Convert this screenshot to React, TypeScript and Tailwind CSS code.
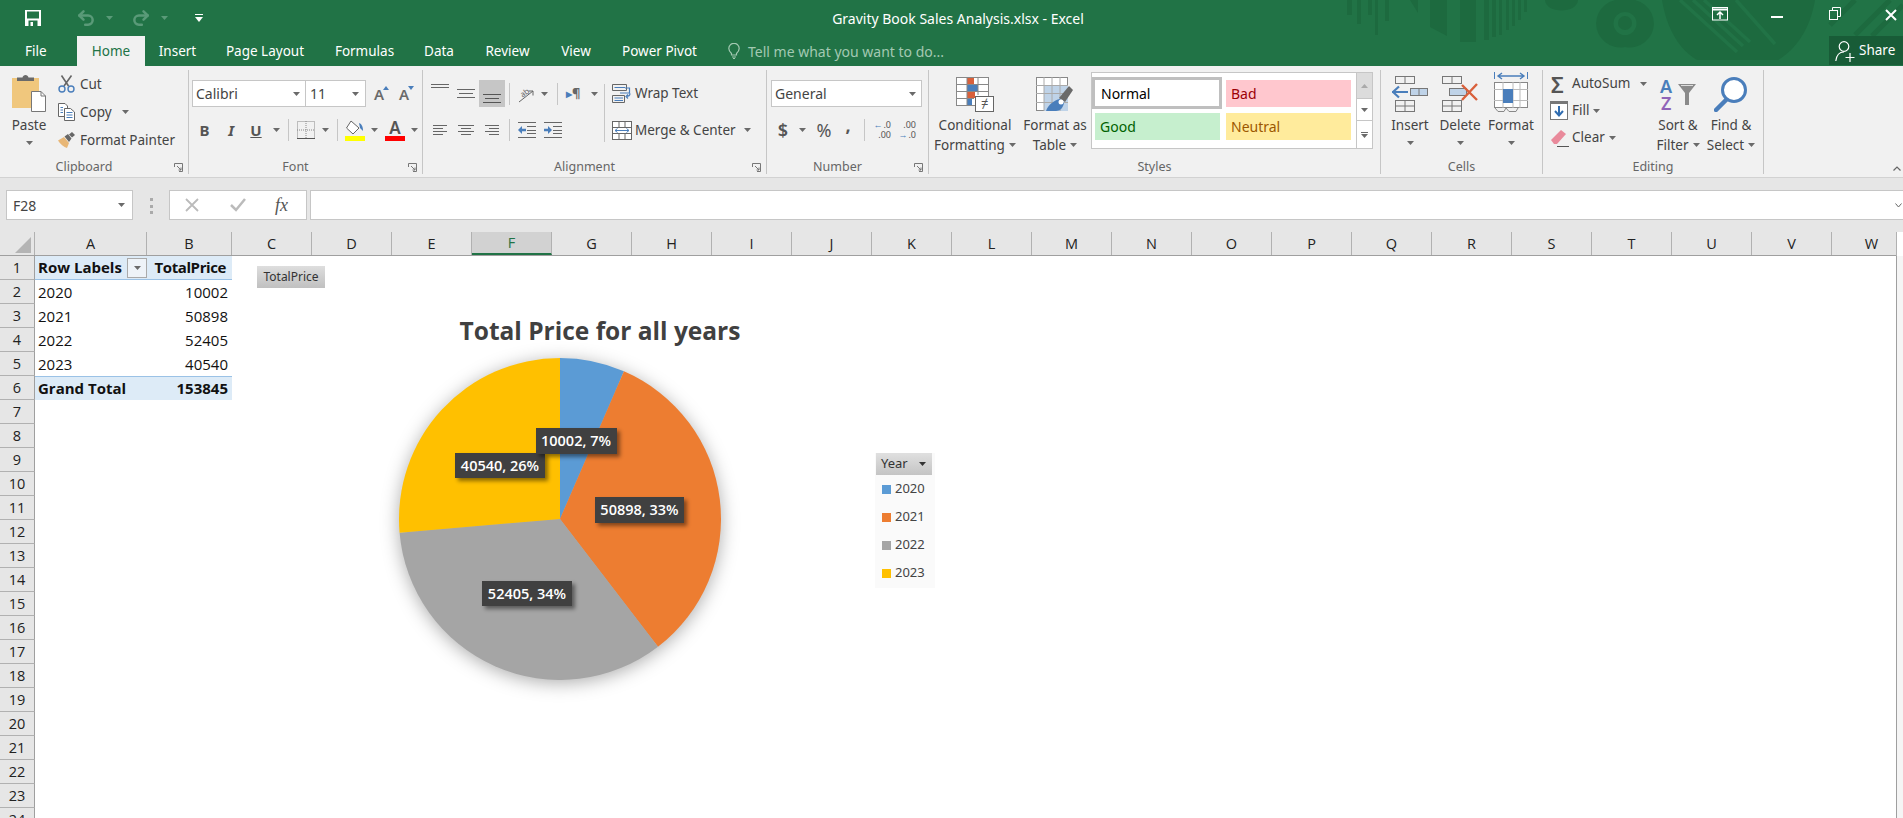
import type { ReactNode } from 'react';
import { Redo2, Undo2 } from 'lucide-react';

const ui = "font-['Noto_Sans',sans-serif]";
const sheetFont = "font-['Open_Sans',sans-serif]";

function Caret({ className = '', color = '#6a6a6a' }: { className?: string; color?: string }) {
  return (
    <svg width="7" height="4" viewBox="0 0 7 4" className={`shrink-0 ${className}`}>
      <polygon points="0,0 7,0 3.5,4" fill={color} />
    </svg>
  );
}

function Launcher() {
  return (
    <svg width="9" height="9" viewBox="0 0 9 9" className="absolute right-[5px] bottom-[2px]" fill="none" stroke="#777">
      <path d="M0.5 4V0.5H8.5V8.5H5" />
      <path d="M3 3L7 7M7 4.5V7H4.5" />
    </svg>
  );
}

function Sep({ className = '' }: { className?: string }) {
  return <div className={`w-px h-[22px] bg-[#c6c6c6] shrink-0 ${className}`} />;
}

function Group({ w, label, launcher, children }: { w: string; label: string; launcher?: boolean; children: ReactNode }) {
  return (
    <div className={`${w} shrink-0 h-[104px] border-r border-[#c6c6c6] relative flex flex-col`}>
      <div className="h-[88px] shrink-0 flex">{children}</div>
      <div className={`h-[18px] shrink-0 leading-[18px] text-center text-[12.5px] text-[#666] ${launcher ? 'pr-[20px]' : ''}`}>{label}</div>
      {launcher && <Launcher />}
    </div>
  );
}

function BigButton({ w, icon, lines, caret = true, iconClass = 'h-[42px]' }: { w: string; icon: ReactNode; lines: string[]; caret?: boolean; iconClass?: string }) {
  return (
    <div className={`${w} shrink-0 flex flex-col items-center text-[13.5px] leading-[20px] text-[#444] whitespace-nowrap`}>
      <div className={`${iconClass} flex items-end justify-center`}>{icon}</div>
      <div className="mt-[3px]">{lines[0]}</div>
      {lines[1] ? (
        <div className="flex items-center gap-[4px]">
          {lines[1]}
          {caret && <Caret />}
        </div>
      ) : (
        <Caret className="mt-[6px]" />
      )}
    </div>
  );
}

function Lines({ w = 18, h = 10, rows, color = '#666' }: { w?: number; h?: number; rows: [number, number, number][]; color?: string }) {
  return (
    <svg width={w} height={h} viewBox={`0 0 ${w} ${h}`} stroke={color}>
      {rows.map(([a, b, y], i) => (
        <line key={i} x1={a} x2={b} y1={y + 0.5} y2={y + 0.5} />
      ))}
    </svg>
  );
}

function IndentIcon({ flip }: { flip?: boolean }) {
  return (
    <svg width="18" height="16" viewBox="0 0 18 16">
      <g stroke="#666">
        <line x1="0" x2="18" y1="0.5" y2="0.5" />
        <line x1="9" x2="18" y1="4.5" y2="4.5" />
        <line x1="9" x2="18" y1="8.5" y2="8.5" />
        <line x1="9" x2="18" y1="11.5" y2="11.5" />
        <line x1="0" x2="18" y1="15.5" y2="15.5" />
      </g>
      {flip ? (
        <path d="M0 6.7H4V4L8 8L4 12V9.3H0Z" fill="#4a7ebb" />
      ) : (
        <path d="M8 6.7H4V4L0 8L4 12V9.3H8Z" fill="#4a7ebb" />
      )}
    </svg>
  );
}

function PasteIcon() {
  return (
    <svg width="34" height="38" viewBox="0 0 34 38">
      <rect x="0" y="4" width="27" height="30" fill="#f0c77d" />
      <path d="M5 7V3.5H10.5C11 0 16 0 16.5 3.5H22V7Z" fill="#6a6a6a" />
      <path d="M19.5 17.5H29L33.5 22V37.5H19.5Z" fill="#fff" stroke="#777" />
      <path d="M29 17.5V22H33.5" fill="none" stroke="#777" />
    </svg>
  );
}

function CutIcon() {
  return (
    <svg width="17" height="18" viewBox="0 0 17 18" fill="none">
      <path d="M6 11L13.5 0.5M10.5 11L3.5 0.5" stroke="#666" strokeWidth="1.6" />
      <circle cx="4" cy="14" r="3" stroke="#4a7ebb" strokeWidth="1.4" />
      <circle cx="13" cy="14" r="3" stroke="#4a7ebb" strokeWidth="1.4" />
    </svg>
  );
}

function CopyIcon() {
  return (
    <svg width="17" height="18" viewBox="0 0 17 18" fill="#fff" stroke="#666">
      <path d="M0.5 0.5H7L9.5 3V13.5H0.5Z" />
      <path d="M6.5 5.5H12.5L16.5 9V17.5H6.5Z" />
      <path d="M2.5 4.5H5M2.5 7H5M2.5 9.5H5M8.5 9.5H14.5M8.5 12H14.5M8.5 14.5H14.5" stroke="#4a7ebb" />
    </svg>
  );
}

function PainterIcon() {
  return (
    <svg width="17" height="16" viewBox="0 0 17 16">
      <path d="M0 8.5L6 5L11 11L9 16C6 15 2 12 0 8.5Z" fill="#e8b777" />
      <path d="M6.5 4.5L10 2L13.5 6.5L11 10Z" fill="#666" />
      <path d="M11 2.5L14 0L17 3L14 5.5Z" fill="#666" />
    </svg>
  );
}

function BorderIcon() {
  return (
    <svg width="18" height="18" viewBox="0 0 18 18" stroke="#888" fill="none" strokeDasharray="1 1">
      <rect x="0.5" y="0.5" width="17" height="17" />
      <path d="M9 0V18M0 9H18" />
      <path d="M0 17.5H18" strokeDasharray="none" stroke="#555" />
    </svg>
  );
}

function FillIcon() {
  return (
    <svg width="20" height="21" viewBox="0 0 20 21">
      <path d="M6 1L14 8L8 14L1.5 8Z" fill="#fff" stroke="#666" />
      <path d="M14 3C17 4 18 7 18 11L15 8Z" fill="#4a7ebb" />
      <rect x="0" y="16" width="20" height="5" fill="#ffff00" />
    </svg>
  );
}

function GrowIcon({ up }: { up?: boolean }) {
  return (
    <div className="w-[15px] h-[16px] relative text-[#6a6a6a] text-[15px] leading-[16px] font-semibold">
      A
      <svg width="6" height="4" viewBox="0 0 6 4" className="absolute right-0 top-0">
        <polygon points={up ? '0,4 6,4 3,0' : '0,0 6,0 3,4'} fill="#4a7ebb" />
      </svg>
    </div>
  );
}

function OrientationIcon() {
  return (
    <svg width="18" height="18" viewBox="0 0 18 18" fill="none" stroke="#666">
      <path d="M1 17L15 6M15 6H10.5M15 6V10.5" />
      <text x="2" y="11" fontSize="8" fill="#666" stroke="none" transform="rotate(-35 6 8)">ab</text>
    </svg>
  );
}

function WrapIcon() {
  return (
    <svg width="20" height="19" viewBox="0 0 20 19" fill="none">
      <path d="M0.5 0.5H14.5V6.5H0.5ZM0.5 11.5H12.5V18.5H0.5Z" stroke="#666" />
      <path d="M2.5 3.5H13M2.5 14H11M2.5 16.5H11" stroke="#4a7ebb" />
      <path d="M8 9H17.5V4H13M18 9.5C18 11 17 12.5 14 12.5M16 10.5L14 12.5L16 14.5" stroke="#4a7ebb" strokeWidth="1.2" />
    </svg>
  );
}

function MergeIcon() {
  return (
    <svg width="20" height="19" viewBox="0 0 20 19" fill="#fff" stroke="#666">
      <rect x="0.5" y="0.5" width="19" height="18" />
      <path d="M0 6.5H20M0 12.5H20M7 0V6M13 0V6M7 13V19M13 13V19" />
      <path d="M3 9.5H17M5.5 7.5L3 9.5L5.5 11.5M14.5 7.5L17 9.5L14.5 11.5" stroke="#4a7ebb" fill="none" />
    </svg>
  );
}

function DecimalIcon({ more }: { more?: boolean }) {
  const top = more ? '.00' : '.0';
  const bottom = more ? '.0' : '.00';
  return (
    <div className="w-[17px] text-[9px] leading-[10px] text-[#555] text-right">
      <div className="flex justify-end items-center gap-px">
        {!more && <span className="text-[#4a7ebb] font-bold">←</span>}
        {top}
      </div>
      <div className="flex justify-end items-center gap-px">
        {more && <span className="text-[#4a7ebb] font-bold">→</span>}
        {bottom}
      </div>
    </div>
  );
}

function CondIcon() {
  return (
    <svg width="38" height="35" viewBox="0 0 38 35">
      <g fill="#fff" stroke="#888">
        <rect x="0.5" y="0.5" width="32" height="28" />
      </g>
      <rect x="11" y="1" width="7" height="6" fill="#d9603b" />
      <rect x="11" y="8" width="11" height="6" fill="#4a7ebb" />
      <rect x="11" y="15" width="8" height="6" fill="#d9603b" />
      <rect x="11" y="22" width="5" height="6" fill="#4a7ebb" />
      <path d="M0 7.5H33M0 14.5H33M0 21.5H18M11 0V28M22 0V18" stroke="#888" fill="none" />
      <rect x="19.5" y="19.5" width="18" height="15" fill="#fff" stroke="#666" />
      <text x="25" y="31" fontSize="13" fill="#555">≠</text>
    </svg>
  );
}

function TableIcon() {
  return (
    <svg width="38" height="35" viewBox="0 0 38 35">
      <rect x="0.5" y="0.5" width="31" height="33" fill="#fff" stroke="#888" />
      <rect x="8" y="8" width="24" height="26" fill="#bfd3e8" />
      <path d="M0 8.5H32M0 16.5H32M0 25.5H32M8 0V34M16 0V34M24 0V34" stroke="#aaa" fill="none" />
      <path d="M23 21L33 9L37 13L29 25Z" fill="#6a6a6a" />
      <path d="M10 34C12 28 18 23 24 22L28 26C27 31 24 34 20 34Z" fill="#4a7ebb" />
      <circle cx="25" cy="25" r="2.5" fill="#fff" />
    </svg>
  );
}

function InsertIcon() {
  return (
    <svg width="36" height="36" viewBox="0 0 36 36" fill="none" stroke="#777">
      <rect x="3.5" y="0.5" width="19" height="7" />
      <path d="M13 0V8" />
      <rect x="18.5" y="12.5" width="17" height="7" fill="#bfd3e8" />
      <path d="M27 12V20" />
      <rect x="3.5" y="24.5" width="19" height="11" />
      <path d="M13 24V36M3 30H23" />
      <path d="M0 16H16M7 10.5L1 16L7 21.5" stroke="#4a7ebb" strokeWidth="2.2" />
    </svg>
  );
}

function DeleteIcon() {
  return (
    <svg width="36" height="36" viewBox="0 0 36 36" fill="none" stroke="#777">
      <rect x="0.5" y="0.5" width="19" height="7" />
      <path d="M10 0V8" />
      <rect x="7.5" y="12.5" width="17" height="7" fill="#bfd3e8" />
      <rect x="0.5" y="24.5" width="19" height="11" />
      <path d="M10 24V36M0 30H20" />
      <path d="M20 9L35 24M35 8L20 24" stroke="#d9603b" strokeWidth="2.4" />
    </svg>
  );
}

function FormatIcon() {
  return (
    <svg width="34" height="40" viewBox="0 0 34 40" fill="none">
      <path d="M0.5 0V7M33.5 0V7" stroke="#4a7ebb" />
      <path d="M4 4H30M8 1L4 4L8 7M26 1L30 4L26 7" stroke="#4a7ebb" strokeWidth="1.4" />
      <rect x="0.5" y="10.5" width="33" height="25" fill="#fff" stroke="#888" />
      <path d="M0 17.5H34M0 28.5H34M9 10V36M19 10V36M26 10V36" stroke="#bbb" />
      <rect x="9" y="17" width="10" height="14" fill="#4a7ebb" />
      <path d="M1 36L4 39.5H10L12 36M12 36L15 39.5H22L24 36" stroke="#888" />
    </svg>
  );
}

function FillDown() {
  return (
    <svg width="18" height="19" viewBox="0 0 18 19">
      <rect x="0.5" y="0.5" width="17" height="18" fill="#fff" stroke="#777" />
      <rect x="0" y="0" width="18" height="3" fill="#777" />
      <path d="M9 5V14M5 10L9 14.5L13 10" stroke="#2f6cb0" strokeWidth="2" fill="none" />
    </svg>
  );
}

function Eraser() {
  return (
    <svg width="18" height="18" viewBox="0 0 18 18">
      <path d="M0 11L10 1L15 5L6 15H3Z" fill="#e98a9b" />
      <path d="M6 17.5H18" stroke="#555" />
    </svg>
  );
}

function SortIcon() {
  return (
    <div className="relative w-[36px] h-[34px]">
      <span className="absolute left-0 top-0 text-[18px] leading-[16px] font-semibold text-[#4a7ebb]">A</span>
      <span className="absolute left-[1px] top-[17px] text-[18px] leading-[16px] font-semibold text-[#9063b8]">Z</span>
      <svg width="18" height="21" viewBox="0 0 18 21" className="absolute right-0 top-[6px]">
        <path d="M0 0H18L11 9V21H7V9Z" fill="#8a8a8a" />
        <path d="M3 1.5H15" stroke="#ddd" />
      </svg>
    </div>
  );
}

function FindIcon() {
  return (
    <svg width="34" height="36" viewBox="0 0 34 36" fill="none">
      <circle cx="20" cy="14" r="11.5" stroke="#4a7ebb" strokeWidth="3" fill="#fff" />
      <path d="M12 24L2 34" stroke="#4a7ebb" strokeWidth="4.5" strokeLinecap="round" />
    </svg>
  );
}

function SaveIcon() {
  return (
    <svg width="16" height="16" viewBox="0 0 16 16">
      <path d="M0 0H16V16H0Z" fill="#fff" />
      <rect x="2" y="1.5" width="12" height="7" fill="#217346" />
      <rect x="3.500" y="10.500" width="9" height="5.500" fill="#217346" />
      <rect x="5.500" y="12" width="2.500" height="4" fill="#fff" />
    </svg>
  );
}

function TitleArt() {
  return (
    <svg width="603" height="66" viewBox="0 0 603 66" className="absolute right-0 top-0 pointer-events-none">
      <g fill="#1d6a3f">
        <rect x="47" y="0" width="5" height="15" />
        <rect x="57" y="0" width="4" height="24" />
        <rect x="68" y="0" width="4" height="15" />
        <rect x="75" y="0" width="3" height="35" />
        <rect x="85" y="0" width="4" height="21" />
        <path d="M110 0H118V13Z" />
        <path d="M130 0H147V36L130 27Z" />
        <path d="M160 0H176V42H160Z" />
        <rect x="184" y="0" width="5" height="40" />
        <rect x="192" y="0" width="4" height="37" />
        <rect x="199" y="0" width="3" height="35" />
        <rect x="206" y="0" width="3" height="30" />
        <rect x="212" y="0" width="3" height="26" />
        <rect x="218" y="0" width="3" height="20" />
        <rect x="224" y="0" width="3" height="12" />
        <path d="M245 0H278C277 14 246 14 245 0Z" />
        <path d="M325 0A24 24 0 1 0 325 47A24 24 0 1 0 325 0ZM325 12A11.500 11.500 0 1 1 325 35A11.500 11.500 0 1 1 325 12Z" fillRule="evenodd" />
        <circle cx="325" cy="23" r="7" />
        <path d="M362 0H515C510 30 495 50 478 60H397C380 50 367 30 362 0Z" />
      </g>
      <g stroke="#217346" strokeWidth="3.5">
        <path d="M380 0L437 52M393 0L443 46M404 0L450 42M436 0L475 44" />
      </g>
      <g stroke="#1d6a3f" strokeWidth="5">
        <path d="M555 35L590 0M572 36L603 5M530 25L555 0" />
      </g>
    </svg>
  );
}

const tabs: [string, string][] = [
  ['Insert', 'w-[65px]'],
  ['Page Layout', 'w-[110px]'],
  ['Formulas', 'w-[89px]'],
  ['Data', 'w-[60px]'],
  ['Review', 'w-[77px]'],
  ['View', 'w-[60px]'],
  ['Power Pivot', 'w-[107px]'],
];

const columns: [string, string][] = [
  ['A', 'w-[112px]'],
  ['B', 'w-[85px]'],
  ...'CDEFGHIJKLMNOPQRSTUVW'.split('').map((c): [string, string] => [c, 'w-[80px]']),
];

const rows = [
  ['2020', '10002'],
  ['2021', '50898'],
  ['2022', '52405'],
  ['2023', '40540'],
];

const slices = [
  { year: '2020', value: 10002, color: '#5b9bd5' },
  { year: '2021', value: 50898, color: '#ed7d31' },
  { year: '2022', value: 52405, color: '#a5a5a5' },
  { year: '2023', value: 40540, color: '#ffc000' },
];

function Pie() {
  const total = slices.reduce((s, x) => s + x.value, 0);
  const R = 161;
  let acc = 0;
  return (
    <svg width="322" height="322" viewBox="-161 -161 322 322" className="drop-shadow-[0_3px_9px_rgba(0,0,0,0.32)]">
      {slices.map((s) => {
        const a0 = (acc / total) * Math.PI * 2;
        acc += s.value;
        const a1 = (acc / total) * Math.PI * 2;
        const large = a1 - a0 > Math.PI ? 1 : 0;
        const d = `M0 0L${R * Math.sin(a0)} ${-R * Math.cos(a0)}A${R} ${R} 0 ${large} 1 ${R * Math.sin(a1)} ${-R * Math.cos(a1)}Z`;
        return <path key={s.year} d={d} fill={s.color} />;
      })}
    </svg>
  );
}

function DataLabel({ text, className }: { text: string; className: string }) {
  return (
    <div
      className={`absolute flex items-center justify-center bg-[#404040] text-white text-[14.5px] font-semibold whitespace-nowrap shadow-[3px_3px_4px_rgba(0,0,0,0.45)] ${sheetFont} ${className}`}
    >
      {text}
    </div>
  );
}

export default function App() {
  return (
    <div className={`w-screen h-screen overflow-hidden flex flex-col bg-[#e6e6e6] ${ui}`}>
      {/* title bar + tabs */}
      <div className="relative h-[66px] shrink-0 bg-[#217346] text-white">
        <TitleArt />
        <div className="relative h-[36px] flex items-center">
          <div className="ml-[25px] w-[16px]">
            <SaveIcon />
          </div>
          <Undo2 size={20} strokeWidth={3} color="#5a9a78" className="ml-[35px]" />
          <Caret color="#5a9a78" className="ml-[10px]" />
          <Redo2 size={20} strokeWidth={3} color="#5a9a78" className="ml-[18px]" />
          <Caret color="#5a9a78" className="ml-[10px]" />
          <svg width="10" height="8" viewBox="0 0 10 8" className="ml-[26px]">
            <path d="M1 0.5H9" stroke="#fff" />
            <polygon points="1,3 9,3 5,8" fill="#fff" />
          </svg>
          <div className="absolute left-0 right-0 pl-[13px] text-center text-[14px]">Gravity Book Sales Analysis.xlsx - Excel</div>
          <div className="absolute left-[1712px] top-[7px] w-[16px] h-[14px]">
            <svg width="16" height="14" viewBox="0 0 16 14" fill="none" stroke="#fff">
              <rect x="0.5" y="0.5" width="15" height="12.5" />
              <path d="M1 2.5H15" strokeWidth="2" />
              <path d="M8 12V5M5 8L8 5L11 8" strokeWidth="1.5" />
            </svg>
          </div>
          <div className="absolute left-[1771px] top-[16px] w-[12px] h-[2px] bg-white" />
          <svg width="12" height="13" viewBox="0 0 12 13" fill="none" stroke="#fff" className="absolute left-[1829px] top-[7px]">
            <rect x="0.5" y="3.500" width="8" height="9" />
            <path d="M3.500 3V0.5H11.500V9.500H9" />
          </svg>
          <svg width="12" height="12" viewBox="0 0 12 12" stroke="#fff" strokeWidth="2" className="absolute left-[1885px] top-[9px]">
            <path d="M1 1L11 11M11 1L1 11" />
          </svg>
        </div>
        <div className="relative h-[30px] flex items-stretch text-[13.5px]">
          <div className="w-[77px] pl-[25px] leading-[31px]">File</div>
          <div className="w-[68px] bg-[#f1f1f1] text-[#217346] text-center leading-[30px]">Home</div>
          {tabs.map(([t, w]) => (
            <div key={t} className={`${w} text-center leading-[30px]`}>
              {t}
            </div>
          ))}
          <div className="ml-[15px] flex items-center text-[#a3c9b2] text-[14px]">
            <svg width="12" height="16" viewBox="0 0 12 16" fill="none" stroke="#a3c9b2" strokeWidth="1.2">
              <path d="M3.500 10.500C2 9 0.8 7.500 0.8 5.500A5.200 5.200 0 0 1 11.200 5.500C11.200 7.500 10 9 8.500 10.500V12H3.500Z" />
              <path d="M4 14H8M5 15.500H7" />
            </svg>
            <span className="ml-[8px]">Tell me what you want to do...</span>
          </div>
          <div className="absolute right-0 top-0 h-[29px] w-[74px] bg-[#185c37] flex items-center pl-[6px]">
            <svg width="20" height="22" viewBox="0 0 20 22" fill="none" stroke="#fff" strokeWidth="1.2">
              <circle cx="9" cy="6.500" r="4.800" />
              <path d="M0.8 21C1.500 15 5 12 9 12" />
              <path d="M15 13V22M10.500 17.500H19.500" />
            </svg>
            <span className="ml-[4px]">Share</span>
          </div>
        </div>
      </div>

      {/* ribbon */}
      <div className="h-[112px] shrink-0 bg-[#f1f1f1] border-b border-[#d2d2d2] pt-[4px] flex text-[#444]">
        <Group w="w-[189px]" label="Clipboard" launcher>
          <div className="w-[58px] flex flex-col items-center">
            <div className="mt-[4px]">
              <PasteIcon />
            </div>
            <div className="mt-[3px] text-[13.5px] leading-[20px]">Paste</div>
            <Caret className="mt-[6px]" />
          </div>
          <div className="flex flex-col text-[13.5px]">
            {[
              ['Cut', <CutIcon key="c" />],
              ['Copy', <CopyIcon key="o" />],
              ['Format Painter', <PainterIcon key="p" />],
            ].map(([t, icon]) => (
              <div key={t as string} className="h-[28px] flex items-center">
                <div className="w-[22px]">{icon}</div>
                <span>{t}</span>
                {t === 'Copy' && <Caret className="ml-[10px]" />}
              </div>
            ))}
          </div>
        </Group>

        <Group w="w-[234px]" label="Font" launcher>
          <div className="flex flex-col pl-[3px] pt-[10px]">
            <div className="h-[27px] flex items-center">
              <div className="w-[114px] h-[27px] bg-white border border-[#c6c6c6] flex items-center justify-between px-[3px] text-[14px]">
                Calibri
                <Caret className="mr-[2px]" />
              </div>
              <div className="w-[60px] h-[27px] bg-white border border-[#c6c6c6] border-l-0 flex items-center justify-between px-[4px] text-[14px]">
                11
                <Caret className="mr-[2px]" />
              </div>
              <div className="ml-[8px]">
                <GrowIcon up />
              </div>
              <div className="ml-[10px]">
                <GrowIcon />
              </div>
            </div>
            <div className="mt-[9px] h-[28px] flex items-center">
              <div className="w-[25px] text-center font-bold text-[15px] text-[#555]">B</div>
              <div className="w-[28px] text-center font-bold italic text-[15px] text-[#555]">I</div>
              <div className="w-[22px] text-center font-bold underline text-[15px] text-[#555]">U</div>
              <Caret className="ml-[6px]" />
              <Sep className="ml-[8px]" />
              <div className="ml-[8px]">
                <BorderIcon />
              </div>
              <Caret className="ml-[7px]" />
              <Sep className="ml-[8px]" />
              <div className="ml-[7px]">
                <FillIcon />
              </div>
              <Caret className="ml-[6px]" />
              <div className="ml-[7px] w-[20px] flex flex-col items-center">
                <span className="text-[17px] leading-[17px] font-semibold text-[#555]">A</span>
                <div className="w-[20px] h-[5px] bg-[#ff0000]" />
              </div>
              <Caret className="ml-[6px]" />
            </div>
          </div>
        </Group>

        <Group w="w-[344px]" label="Alignment" launcher>
          <div className="w-[181px] pl-[4px] pt-[10px] flex flex-col">
            <div className="h-[27px] flex items-center">
              <div className="w-[26px] h-[27px] flex justify-center pt-[4px]">
                <Lines rows={[[0, 18, 0], [0, 18, 3]]} />
              </div>
              <div className="w-[26px] h-[27px] flex items-center justify-center">
                <Lines rows={[[0, 18, 0], [2, 16, 4], [0, 18, 8]]} />
              </div>
              <div className="w-[26px] h-[27px] bg-[#c6c6c6] flex items-end justify-center pb-[3px]">
                <Lines rows={[[0, 18, 0], [2, 16, 4], [0, 18, 8]]} color="#555" />
              </div>
              <Sep className="ml-[4px]" />
              <div className="ml-[8px]">
                <OrientationIcon />
              </div>
              <Caret className="ml-[5px]" />
              <Sep className="ml-[9px]" />
              <div className="ml-[8px] w-[18px] flex items-center text-[13px] font-bold text-[#666] leading-none">
                <span className="text-[#4a7ebb] text-[8px]">▶</span>¶
              </div>
              <Caret className="ml-[7px]" />
            </div>
            <div className="mt-[9px] h-[28px] flex items-center">
              <div className="w-[26px] flex justify-center">
                <Lines w={14} h={11} rows={[[0, 14, 0], [0, 10, 3], [0, 14, 6], [0, 10, 9]]} />
              </div>
              <div className="w-[26px] flex justify-center">
                <Lines w={16} h={11} rows={[[0, 16, 0], [3, 13, 3], [0, 16, 6], [3, 13, 9]]} />
              </div>
              <div className="w-[26px] flex justify-center">
                <Lines w={14} h={11} rows={[[0, 14, 0], [4, 14, 3], [0, 14, 6], [4, 14, 9]]} />
              </div>
              <Sep className="ml-[4px]" />
              <div className="ml-[8px]">
                <IndentIcon />
              </div>
              <div className="ml-[8px]">
                <IndentIcon flip />
              </div>
            </div>
          </div>
          <div className="w-px h-[58px] mt-[14px] bg-[#c6c6c6] shrink-0" />
          <div className="w-[152px] pl-[7px] pt-[10px] text-[13.5px] flex flex-col">
            <div className="h-[27px] flex items-center">
              <div className="w-[23px]">
                <WrapIcon />
              </div>
              Wrap Text
            </div>
            <div className="mt-[9px] h-[28px] flex items-center">
              <div className="w-[23px]">
                <MergeIcon />
              </div>
              Merge &amp; Center
              <Caret className="ml-[8px]" />
            </div>
          </div>
        </Group>

        <Group w="w-[162px]" label="Number" launcher>
          <div className="pl-[4px] pt-[10px] flex flex-col">
            <div className="w-[151px] h-[27px] bg-white border border-[#c6c6c6] flex items-center justify-between px-[3px] text-[14px]">
              General
              <Caret className="mr-[2px]" />
            </div>
            <div className="mt-[9px] h-[28px] flex items-center text-[#555]">
              <div className="w-[24px] text-center text-[18px] font-semibold">$</div>
              <Caret className="ml-[4px]" />
              <div className="ml-[8px] w-[20px] text-center text-[18px]">%</div>
              <div className="ml-[8px] w-[12px] -mt-[10px] text-center text-[18px] font-bold leading-[18px]">,</div>
              <Sep className="ml-[10px]" />
              <div className="ml-[9px]">
                <DecimalIcon />
              </div>
              <div className="ml-[8px]">
                <DecimalIcon more />
              </div>
            </div>
          </div>
        </Group>

        <Group w="w-[452px]" label="Styles">
          <BigButton w="w-[92px]" icon={<CondIcon />} lines={['Conditional', 'Formatting']} />
          <BigButton w="w-[68px]" icon={<TableIcon />} lines={['Format as', 'Table']} />
          <div className="ml-[2px] mt-[2px] w-[282px] h-[77px] flex border border-[#c6c6c6] bg-white text-[14px]">
            <div className="w-[264px] grid grid-cols-[130px_125px] gap-x-[4px] gap-y-[4px] grid-rows-[32px_27px] pt-[4px]">
              <div className="border-[3px] border-[#bfbfbf] text-black flex items-center pl-[6px]">Normal</div>
              <div className="self-center h-[27px] bg-[#ffc7ce] text-[#9c0006] flex items-center pl-[5px]">Bad</div>
              <div className="ml-[3px] w-[125px] bg-[#c6efce] text-[#006100] flex items-center pl-[5px]">Good</div>
              <div className="bg-[#ffeb9c] text-[#9c5700] flex items-center pl-[5px]">Neutral</div>
            </div>
            <div className="flex-1 flex flex-col border-l border-[#c6c6c6]">
              <div className="h-[25px] bg-[#dcdcdc] flex items-center justify-center">
                <svg width="7" height="4" viewBox="0 0 7 4">
                  <polygon points="0,4 7,4 3.500,0" fill="#aaa" />
                </svg>
              </div>
              <div className="h-[23px] border-y border-[#c6c6c6] flex items-center justify-center">
                <Caret />
              </div>
              <div className="flex-1 flex flex-col items-center justify-center">
                <div className="w-[7px] h-px bg-[#6a6a6a] mb-[1px]" />
                <Caret />
              </div>
            </div>
          </div>
        </Group>

        <Group w="w-[162px]" label="Cells">
          <BigButton w="w-[58px]" icon={<InsertIcon />} lines={['Insert']} />
          <BigButton w="w-[42px]" icon={<DeleteIcon />} lines={['Delete']} />
          <BigButton w="w-[60px]" icon={<FormatIcon />} lines={['Format']} />
        </Group>

        <Group w="w-[221px]" label="Editing">
          <div className="w-[111px] text-[13.5px] flex flex-col">
            <div className="h-[27px] flex items-center pl-[8px]">
              <div className="w-[21px] text-[22px] leading-[20px] font-semibold text-[#555]">Σ</div>
              AutoSum
              <Caret className="ml-[10px]" />
            </div>
            <div className="h-[27px] flex items-center pl-[7px]">
              <div className="w-[22px]">
                <FillDown />
              </div>
              Fill
              <Caret className="ml-[4px]" />
            </div>
            <div className="h-[27px] flex items-center pl-[8px]">
              <div className="w-[21px]">
                <Eraser />
              </div>
              Clear
              <Caret className="ml-[4px]" />
            </div>
          </div>
          <BigButton w="w-[48px]" icon={<SortIcon />} lines={['Sort &', 'Filter']} />
          <BigButton w="w-[58px]" icon={<FindIcon />} lines={['Find &', 'Select']} />
        </Group>

        <div className="flex-1 flex items-end justify-end pr-[2px] pb-[6px]">
          <svg width="8" height="5" viewBox="0 0 8 5" fill="none" stroke="#666" strokeWidth="1.2">
            <path d="M0.5 4.500L4 1L7.500 4.500" />
          </svg>
        </div>
      </div>

      {/* formula bar */}
      <div className="h-[54px] shrink-0 pt-[12px] flex items-start">
        <div className="ml-[6px] w-[127px] h-[30px] bg-white border border-[#c6c6c6] flex items-center justify-between pl-[6px] pr-[7px] text-[14px] text-[#444]">
          F28
          <Caret />
        </div>
        <div className="ml-[17px] w-[3px] h-[16px] mt-[8px] border-l-[3px] border-dotted border-[#aaa]" />
        <div className="ml-[16px] w-[138px] h-[30px] bg-white border border-[#c6c6c6] flex items-center">
          <svg width="14" height="14" viewBox="0 0 14 14" stroke="#bbb" strokeWidth="1.800" className="ml-[15px]">
            <path d="M1 1L13 13M13 1L1 13" />
          </svg>
          <svg width="16" height="14" viewBox="0 0 16 14" fill="none" stroke="#bbb" strokeWidth="2.500" className="ml-[31px]">
            <path d="M1 7L6 12L15 1" />
          </svg>
          <span className="ml-[29px] text-[18px] italic text-[#555] font-['Liberation_Serif',serif]">fx</span>
        </div>
        <div className="ml-[3px] flex-1 h-[30px] bg-white border border-[#c6c6c6] border-r-0 flex items-center justify-end pr-[1px]">
          <svg width="7" height="5" viewBox="0 0 7 5" fill="none" stroke="#666">
            <path d="M0.5 0.5L3.500 4L6.500 0.5" />
          </svg>
        </div>
      </div>

      {/* sheet */}
      <div className={`flex-1 min-h-0 flex bg-white ${sheetFont}`}>
        <div className="flex-1 min-w-0 overflow-hidden flex flex-col">
          <div className="h-[24px] shrink-0 flex bg-[#e6e6e6] border-b border-[#9f9f9f] text-[14.5px] text-[#222]">
            <div className="w-[35px] shrink-0 border-r border-[#b1b1b1] flex items-end justify-end pr-[3px] pb-[2px]">
              <svg width="16" height="16" viewBox="0 0 16 16">
                <polygon points="16,0 16,16 0,16" fill="#b4b4b4" />
              </svg>
            </div>
            {columns.map(([c, w]) => (
              <div
                key={c}
                className={`${w} shrink-0 h-[23px] flex items-center justify-center border-r border-[#b1b1b1] ${
                  c === 'F' ? 'bg-[#d2d2d2] border-b-2 border-b-[#217346] text-[#217346]' : ''
                }`}
              >
                {c}
              </div>
            ))}
          </div>
          <div className="relative flex-1 min-h-0 overflow-hidden">
            {Array.from({ length: 24 }, (_, i) => i + 1).map((n) => {
              const data = rows[n - 2];
              const isHead = n === 1;
              const isTotal = n === 6;
              return (
                <div key={n} className="h-[24px] flex text-[15px] text-[#111]">
                  <div className="w-[35px] shrink-0 bg-[#e6e6e6] border-r border-b border-r-[#9f9f9f] border-b-[#b1b1b1] flex items-center justify-center text-[14.5px] text-[#222]">
                    {n}
                  </div>
                  {isHead && (
                    <div className="w-[197px] flex bg-[#ddebf7] border-b border-[#9bc2e6] font-bold items-center">
                      <div className="w-[112px] pl-[3px] flex items-center relative h-full">
                        Row Labels
                        <div className="absolute right-0 top-[2px] w-[20px] h-[20px] bg-[#eef3f8] border border-[#aaa] flex items-center justify-center">
                          <Caret />
                        </div>
                      </div>
                      <div className="w-[85px] text-right pr-[6px] tracking-[-0.4px]">TotalPrice</div>
                    </div>
                  )}
                  {data && (
                    <div className="w-[197px] flex items-center">
                      <div className="w-[112px] pl-[3px]">{data[0]}</div>
                      <div className="w-[85px] text-right pr-[4px]">{data[1]}</div>
                    </div>
                  )}
                  {isTotal && (
                    <div className="w-[197px] flex bg-[#ddebf7] border-t border-[#9bc2e6] font-bold items-center">
                      <div className="w-[112px] pl-[3px]">Grand Total</div>
                      <div className="w-[85px] text-right pr-[4px]">153845</div>
                    </div>
                  )}
                </div>
              );
            })}

            {/* pivot chart, a free canvas laid over the cells */}
            <div className="absolute left-[35px] top-0 w-[1000px] h-[560px]">
              <div className="absolute left-[222px] top-[10px] w-[68px] h-[22px] bg-gradient-to-b from-[#dedede] to-[#c0c0c0] text-[12px] text-[#333] flex items-center justify-center font-['Noto_Sans',sans-serif]">
                TotalPrice
              </div>
              <div className="absolute left-[424px] top-[58px] w-[282px] text-center text-[24.5px] leading-[34px] font-bold text-[#404040] whitespace-nowrap">
                Total Price for all years
              </div>
              <div className="absolute left-[363.500px] top-[102px]">
                <Pie />
              </div>
              <DataLabel text="40540, 26%" className="left-[420px] top-[197px] w-[90px] h-[25px]" />
              <DataLabel text="10002, 7%" className="left-[500.500px] top-[172px] w-[81px] h-[26px]" />
              <DataLabel text="50898, 33%" className="left-[560px] top-[241px] w-[89px] h-[26px]" />
              <DataLabel text="52405, 34%" className="left-[447px] top-[325px] w-[90px] h-[25px]" />
              <div className="absolute left-[840px] top-[197px] w-[60px] h-[135px] bg-[#fafafa] pl-[1px] font-['Noto_Sans',sans-serif]">
                <div className="w-[56px] h-[22px] bg-gradient-to-b from-[#e0e0e0] to-[#c4c4c4] flex items-center justify-between pl-[5px] pr-[6px] text-[13px] text-[#333]">
                  Year
                  <Caret color="#333" />
                </div>
                <div>
                  {slices.map((s) => (
                    <div key={s.year} className="h-[28px] flex items-center pl-[6px] text-[13px] text-[#444]">
                      <div className="w-[9px] h-[9px] mr-[4px]" style={{ backgroundColor: s.color }} />
                      {s.year}
                    </div>
                  ))}
                </div>
              </div>
            </div>
          </div>
        </div>
        <div className="w-[7px] shrink-0 flex flex-col">
          <div className="h-[24px] bg-white border-l border-[#b1b1b1]" />
          <div className="flex-1 bg-[#f5f5f5] border-l border-[#9f9f9f]" />
        </div>
      </div>
    </div>
  );
}
